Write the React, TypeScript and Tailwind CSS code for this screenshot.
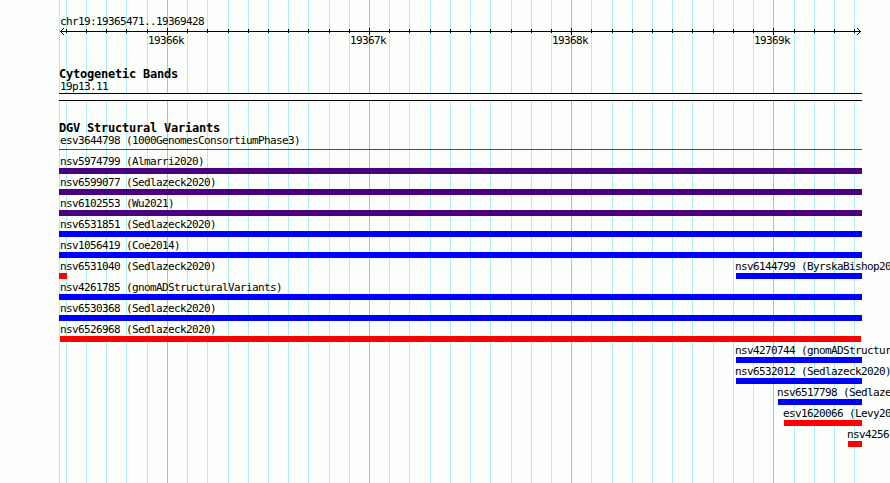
const MINOR = [
  59, 66, 86, 106, 126, 147, 187, 207, 228, 248, 268, 288, 308, 329, 349, 389, 409, 430, 450, 470,
  490, 511, 531, 551, 591, 612, 632, 652, 672, 692, 713, 733, 753, 794, 814, 834, 854,
];
const MAJOR = [167, 369, 571, 773];

type Feature = { name: string; start: number; end: number; text: number; color: string };

const full = (name: string, color: string): Feature => ({ name, start: 59, end: 862, text: 60, color });

const ROWS: Feature[][] = [
  [full('nsv5974799 (Almarri2020)', 'bg-[#4b0082]')],
  [full('nsv6599077 (Sedlazeck2020)', 'bg-[#4b0082]')],
  [full('nsv6102553 (Wu2021)', 'bg-[#4b0082]')],
  [full('nsv6531851 (Sedlazeck2020)', 'bg-[#0000ff]')],
  [full('nsv1056419 (Coe2014)', 'bg-[#0000ff]')],
  [
    { name: 'nsv6531040 (Sedlazeck2020)', start: 59, end: 67, text: 60, color: 'bg-[#ff0000]' },
    { name: 'nsv6144799 (ByrskaBishop2020)', start: 736, end: 862, text: 735, color: 'bg-[#0000ff]' },
  ],
  [full('nsv4261785 (gnomADStructuralVariants)', 'bg-[#0000ff]')],
  [full('nsv6530368 (Sedlazeck2020)', 'bg-[#0000ff]')],
  [{ name: 'nsv6526968 (Sedlazeck2020)', start: 60, end: 861, text: 60, color: 'bg-[#ff0000]' }],
  [{ name: 'nsv4270744 (gnomADStructuralVariants)', start: 736, end: 862, text: 735, color: 'bg-[#0000ff]' }],
  [{ name: 'nsv6532012 (Sedlazeck2020)', start: 736, end: 862, text: 735, color: 'bg-[#0000ff]' }],
  [{ name: 'nsv6517798 (Sedlazeck2020)', start: 778, end: 862, text: 777, color: 'bg-[#0000ff]' }],
  [{ name: 'esv1620066 (Levy2007)', start: 784, end: 862, text: 783, color: 'bg-[#ff0000]' }],
  [{ name: 'nsv4256', start: 848, end: 862, text: 847, color: 'bg-[#ff0000]' }],
];

function Gridlines() {
  return (
    <svg className="absolute inset-0" width="890" height="483" shapeRendering="crispEdges">
      {MINOR.map((x) => (
        <rect key={x} x={x} y="0" width="1" height="483" fill="#afeeee" />
      ))}
      {MAJOR.map((x) => (
        <rect key={x} x={x} y="0" width="1" height="483" fill="#87ceeb" />
      ))}
    </svg>
  );
}

function Ruler() {
  return (
    <svg className="block h-[6px] w-[890px] overflow-visible" shapeRendering="crispEdges">
      <rect x="60" y="3" width="801" height="1" />
      {MINOR.slice(1).map((x) => (
        <rect key={x} x={x} y="1" width="1" height="4" />
      ))}
      {MAJOR.map((x) => (
        <rect key={x} x={x} y="0" width="1" height="7" />
      ))}
      {[1, 2, 3].map((d) => (
        <g key={d}>
          <rect x={60 + d} y={3 - d} width="1" height="1" />
          <rect x={60 + d} y={3 + d} width="1" height="1" />
          <rect x={860 - d} y={3 - d} width="1" height="1" />
          <rect x={860 - d} y={3 + d} width="1" height="1" />
        </g>
      ))}
    </svg>
  );
}

function Title({ children }: { children: string }) {
  return (
    <h2 className="h-[13px] pl-[59px] text-[12px] leading-[14px] font-bold tracking-[-0.224px]">{children}</h2>
  );
}

function FeatureRow({ features }: { features: Feature[] }) {
  return (
    <div className="grid h-[21px] grid-cols-1">
      {features.map((f) => (
        <div key={f.name} className="col-start-1 row-start-1">
          <div className="h-[13px]" style={{ marginLeft: f.text }}>
            {f.name}
          </div>
          <div className={'h-[6px] ' + f.color} style={{ marginLeft: f.start, width: f.end - f.start }} />
        </div>
      ))}
    </div>
  );
}

export default function App() {
  return (
    <main className="relative h-[483px] w-[890px] overflow-hidden bg-[#fcfefc] font-['DejaVu_Sans_Mono',monospace] text-[11px] leading-[13px] tracking-[-0.622px] whitespace-nowrap text-black">
      <Gridlines />
      <div className="relative pt-[15px]">
        <div className="pl-[60px]">chr19:19365471..19369428</div>
        <Ruler />
        <div className="flex gap-[166px] pl-[148px]">
          {['19366k', '19367k', '19368k', '19369k'].map((t) => (
            <span key={t} className="w-[36px]">
              {t}
            </span>
          ))}
        </div>

        <section className="pt-[20px]">
          <Title>Cytogenetic Bands</Title>
          <div className="pl-[60px]">19p13.11</div>
          <div className="ml-[59px] h-[8px] w-[803px] border-y border-black bg-[#fcfefc]" />
        </section>

        <section className="pt-[20px]">
          <Title>DGV Structural Variants</Title>
          <div className="pl-[60px]">esv3644798 (1000GenomesConsortiumPhase3)</div>
          <div className="mt-[2px] mb-[5px] ml-[59px] h-px w-[803px] bg-[#ff0000]" />
          {ROWS.map((r) => (
            <FeatureRow key={r[0].name} features={r} />
          ))}
        </section>
      </div>
    </main>
  );
}
